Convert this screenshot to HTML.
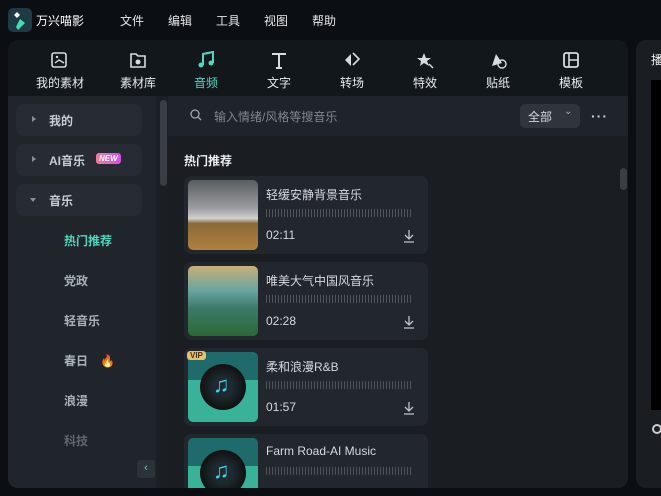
<!DOCTYPE html><html><head><meta charset="utf-8"><style>
*{margin:0;padding:0;box-sizing:border-box}
body{width:661px;height:496px;background:#0b0e12;font-family:"Liberation Sans","Noto Sans CJK SC",sans-serif;color:#d8dce2;position:relative;overflow:hidden;font-size:12px}
.abs{position:absolute}
.menu span{position:absolute;top:12px;font-size:12px;color:#e6e8ea}
.panel{left:8px;top:40px;width:620px;height:448px;border-radius:10px;background:#1a1d21;overflow:hidden}
.tb{left:0;top:0;width:620px;height:56px;background:#12171c}
.tool{position:absolute;top:10px;width:60px;text-align:center;font-size:12px;color:#e8eaec}
.tool svg{display:block;margin:0 auto 4px}
.side{left:0;top:56px;width:160px;height:392px;background:#20252c}
.cat{position:absolute;left:8px;width:126px;height:32px;border-radius:8px;background:#272b33;font-size:12px;font-weight:bold;color:#c8ccd2;padding:8px 0 0 33px}
.cat i{position:absolute;left:16px;top:12px;width:0;height:0;border-left:4px solid #8a9098;border-top:3px solid transparent;border-bottom:3px solid transparent}
.sub{position:absolute;left:56px;font-size:12px;font-weight:bold;color:#a9b0b8}
.card{position:absolute;left:176px;width:244px;height:78px;border-radius:7px;background:#22262d}
.th{position:absolute;left:4px;top:4px;width:70px;height:70px;border-radius:5px;overflow:hidden}
.ttl{position:absolute;left:82px;top:10px;font-size:12px;color:#d6d9de}
.wave{position:absolute;left:82px;top:33px;width:146px;height:8px;background:repeating-linear-gradient(90deg,#4e545c 0 1px,transparent 1px 3px)}
.tm{position:absolute;left:82px;top:52px;font-size:12px;color:#d6d9de}
.dl{position:absolute;left:219px;top:53px}
.disc{background:linear-gradient(#1f6a6a 0 40%,#38b39a 40% 100%)}
</style></head><body>
<div class="abs" style="left:8px;top:8px;width:24px;height:24px;border-radius:5px;background:#1e3a44"><svg width="24" height="24"><path d="M9 4l3 3-3 3-3-3z" fill="#fff"/><path d="M12 11l5 4-7 7 -2-3z" fill="#3ee0b8"/></svg></div>
<div class="abs" style="left:36px;top:12px;font-size:12px;color:#fff">万兴喵影</div>
<div class="menu"><span style="left:120px">文件</span><span style="left:168px">编辑</span><span style="left:216px">工具</span><span style="left:264px">视图</span><span style="left:312px">帮助</span></div>
<div class="abs panel">
 <div class="abs tb">
  <div class="tool" style="left:22px"><svg width="20" height="20"><rect x="2" y="3" width="14" height="14" rx="2" fill="none" stroke="#d8dce2" stroke-width="1.6"/><path d="M5 13l4-3 5 3" stroke="#d8dce2" fill="none" stroke-width="1.4"/><circle cx="7" cy="7" r="1.2" fill="#d8dce2"/></svg>我的素材</div>
  <div class="tool" style="left:100px"><svg width="20" height="20"><path d="M3 4h5l2 2h7v11H3z" fill="none" stroke="#d8dce2" stroke-width="1.6"/><circle cx="10" cy="12" r="2.5" fill="#d8dce2"/></svg>素材库</div>
  <div class="tool" style="left:168px;color:#4fd8bd"><svg width="20" height="20"><path d="M7 15V4l10-2v11" fill="none" stroke="#4fd8bd" stroke-width="2"/><circle cx="5" cy="15" r="2.5" fill="#4fd8bd"/><circle cx="15" cy="13" r="2.5" fill="#4fd8bd"/></svg>音频</div>
  <div class="tool" style="left:241px"><svg width="20" height="20"><path d="M3 4h14M10 4v14M7 18h6" stroke="#d8dce2" stroke-width="2" fill="none"/></svg>文字</div>
  <div class="tool" style="left:314px"><svg width="20" height="20"><path d="M9 4l-6 6 6 6z" fill="#d8dce2"/><path d="M11 3l6 6-6 6" fill="none" stroke="#d8dce2" stroke-width="1.6"/></svg>转场</div>
  <div class="tool" style="left:387px"><svg width="20" height="20"><path d="M9 3l2 5 5 0-4 3 2 5-5-3-4 3 1-5-4-3 5 0z" fill="#d8dce2"/><path d="M14 14l4 4" stroke="#d8dce2" stroke-width="1.5"/></svg>特效</div>
  <div class="tool" style="left:460px"><svg width="20" height="20"><path d="M4 16l4-12 6 9z" fill="#d8dce2"/><circle cx="14" cy="14" r="4" fill="none" stroke="#d8dce2" stroke-width="1.4"/></svg>贴纸</div>
  <div class="tool" style="left:533px"><svg width="20" height="20"><rect x="3" y="3" width="14" height="14" rx="2" fill="none" stroke="#d8dce2" stroke-width="1.8"/><path d="M8 3v14M8 10h9" stroke="#d8dce2" stroke-width="1.6"/></svg>模板</div>
 </div>
 <div class="abs side">
  <div class="cat" style="top:8px"><i></i>我的</div>
  <div class="cat" style="top:48px"><i></i>AI音乐<span style="position:absolute;left:80px;top:9px;font-size:8px;font-style:italic;color:#fff;background:linear-gradient(90deg,#f67a9a,#d84de8);padding:0 3px;border-radius:3px;line-height:11px">NEW</span></div>
  <div class="cat" style="top:88px"><i style="left:14px;top:14px;border-left:3px solid transparent;border-right:3px solid transparent;border-top:4px solid #8a9098;border-bottom:0"></i>音乐</div>
  <div class="sub" style="top:136px;color:#4fd8bd">热门推荐</div>
  <div class="sub" style="top:176px">党政</div>
  <div class="sub" style="top:216px">轻音乐</div>
  <div class="sub" style="top:256px">春日<span style="color:#f55;margin-left:12px">🔥</span></div>
  <div class="sub" style="top:296px">浪漫</div>
  <div class="sub" style="top:336px;color:#60666e">科技</div>
  <div class="abs" style="left:0;top:358px;width:148px;height:34px;background:#20252c"></div>
  <div class="abs" style="left:129px;top:364px;width:18px;height:18px;border-radius:3px;background:#2c3239;color:#4fd8bd;text-align:center;line-height:17px;font-size:11px">‹</div>
  <div class="abs" style="left:148px;top:0;width:12px;height:392px;background:#1b1f24"></div>
  <div class="abs" style="left:152px;top:4px;width:7px;height:86px;border-radius:4px;background:#3a3f46"></div>
 </div>
 <div class="abs" style="left:160px;top:56px;width:460px;height:40px;background:#1f242a"></div>
 <svg class="abs" style="left:182px;top:69px" width="12" height="12"><circle cx="5" cy="5" r="4" fill="none" stroke="#a0a6ae" stroke-width="1.3"/><path d="M8 8l3 3" stroke="#a0a6ae" stroke-width="1.3"/></svg>
 <div class="abs" style="left:206px;top:68px;color:#80868e">输入情绪/风格等搜音乐</div>
 <div class="abs" style="left:512px;top:64px;width:60px;height:24px;border-radius:5px;background:#30353c;color:#d6d9de;padding:4px 0 0 8px">全部<span style="position:absolute;left:44px;top:2px;color:#aaa;font-size:10px">⌄</span></div>
 <div class="abs" style="left:583px;top:68px;color:#ccc;font-size:14px;letter-spacing:1px;font-weight:bold">···</div>
 <div class="abs" style="left:176px;top:112px;font-weight:bold;color:#eef0f2">热门推荐</div>
 <div class="abs" style="left:612px;top:128px;width:7px;height:22px;border-radius:4px;background:#3a3f46"></div>
 <div class="card" style="top:136px"><div class="th" style="background:linear-gradient(#5a5d60 0,#9a9c9e 40%,#d0d0ce 55%,#8a6a3a 62%,#b08040 100%)"></div><div class="ttl">轻缓安静背景音乐</div><div class="wave"></div><div class="tm">02:11</div><svg class="dl" width="12" height="14"><path d="M6 1v8M2 6l4 4 4-4M1 13h10" stroke="#c0c4ca" fill="none" stroke-width="1.3"/></svg></div>
 <div class="card" style="top:222px"><div class="th" style="background:linear-gradient(#c8b078 0,#6aa4a0 35%,#3c7a6a 60%,#2a6a34 100%)"></div><div class="ttl">唯美大气中国风音乐</div><div class="wave"></div><div class="tm">02:28</div><svg class="dl" width="12" height="14"><path d="M6 1v8M2 6l4 4 4-4M1 13h10" stroke="#c0c4ca" fill="none" stroke-width="1.3"/></svg></div>
 <div class="card" style="top:308px"><div class="th disc"><div style="position:absolute;left:12px;top:12px;width:46px;height:46px;border-radius:50%;background:radial-gradient(#1d2a30 30%,#111 70%)"></div><div style="position:absolute;left:25px;top:20px;color:#3ad4f0;font-size:22px">♫</div></div><div class="abs" style="left:3px;top:3px;background:#e8c070;color:#4a3210;font-size:8px;font-weight:bold;padding:0 3px;border-radius:3px">VIP</div><div class="ttl">柔和浪漫R&amp;B</div><div class="wave"></div><div class="tm">01:57</div><svg class="dl" width="12" height="14"><path d="M6 1v8M2 6l4 4 4-4M1 13h10" stroke="#c0c4ca" fill="none" stroke-width="1.3"/></svg></div>
 <div class="card" style="top:394px"><div class="th disc"><div style="position:absolute;left:12px;top:12px;width:46px;height:46px;border-radius:50%;background:radial-gradient(#1d2a30 30%,#111 70%)"></div><div style="position:absolute;left:25px;top:20px;color:#3ad4f0;font-size:22px">♫</div></div><div class="ttl">Farm Road-AI Music</div><div class="wave"></div></div>
</div>
<div class="abs" style="left:636px;top:40px;width:30px;height:448px;border-radius:10px 0 0 10px;background:#1a1d21;overflow:hidden">
 <div class="abs" style="left:15px;top:11px;font-size:12px;color:#eee">播</div>
 <div class="abs" style="left:15px;top:40px;width:20px;height:330px;background:#000"></div>
 <div class="abs" style="left:16px;top:384px;width:10px;height:10px;border-radius:50%;border:2px solid #ccc"></div>
</div>
</body></html>
